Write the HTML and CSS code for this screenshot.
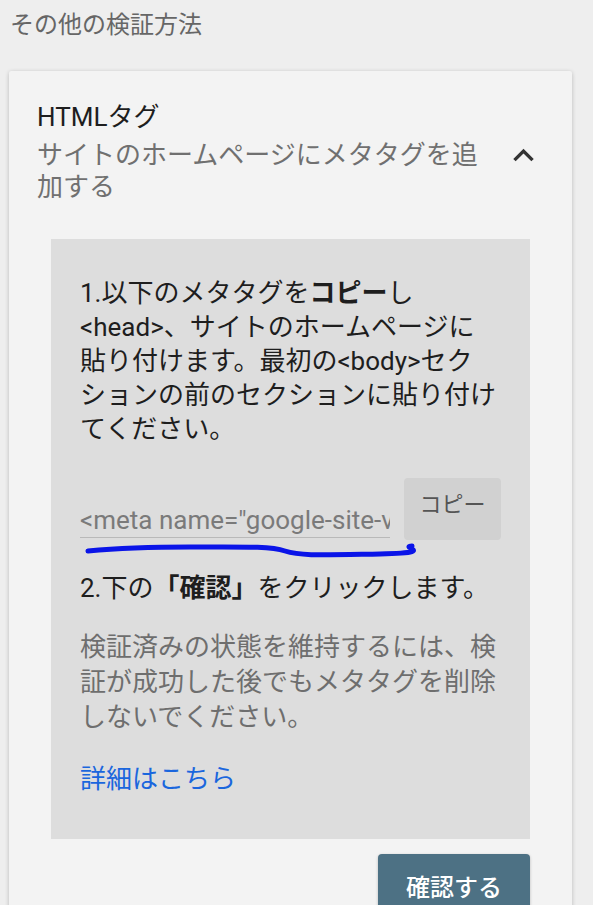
FILE: index.html
```html
<!DOCTYPE html>
<html lang="ja">
<head>
    <meta charset="UTF-8">
    <title>その他の検証方法</title>
    <link rel="stylesheet" href="styles.css">
</head>

<body>
    <div class="section-title">その他の検証方法</div>

    <div class="card">
        <!-- header -->
        <div class="card-header">
            <div class="card-heading">
                <div class="card-title">HTMLタグ</div>
                <div class="card-subtitle">サイトのホームページにメタタグを追加する</div>
            </div>
            <svg class="chevron" viewBox="0 0 24 24" width="41" height="41">
                <path d="M12 8l-6 6 1.41 1.41L12 10.83l4.59 4.58L18 14z" fill="#333"/>
            </svg>
        </div>

        <!-- instructions -->
        <div class="panel">
            <p class="step">1.以下のメタタグを<strong>コピー</strong>し<br>&lt;head&gt;、サイトのホームページに<br>貼り付けます。最初の&lt;body&gt;セク<br>ションの前のセクションに貼り付け<br>てください。</p>

            <div class="copy-row">
                <div class="meta-input">&lt;meta name="google-site-verification" content="4fQx2kq8h7PzT1"&gt;</div>
                <button class="copy-button">コピー</button>
                <svg class="scribble" width="350" height="24" viewBox="0 0 350 24">
                    <path d="M8 14 C 40 11, 60 10, 110 10 S 190 9, 205 14 S 240 18, 300 17 S 318 10, 332 9" fill="none" stroke="#0a14e8" stroke-width="5" stroke-linecap="round"/>
                </svg>
            </div>

            <p class="step step-2">2.下の<strong>「確認」</strong>をクリックします。</p>

            <p class="note">検証済みの状態を維持するには、検証が成功した後でもメタタグを削除しないでください。</p>

            <a href="#" class="more-link">詳細はこちら</a>
        </div>

        <div class="card-actions">
            <button class="verify-button">確認する</button>
        </div>
    </div>
</body>
</html>
```

FILE: styles.css
```css
body{
    margin: 0;
    padding: 9px 21px 0 9px;
    background: #eeeeee;
    font-family: Roboto, "Noto Sans CJK JP", sans-serif;
    color: #222;
}
.section-title{
    padding-left: 1px;
    font-size: 24px;
    line-height: 32px;
    color: #666;
}
.card{
    margin-top: 30px;
    background: #f3f3f3;
    box-shadow: 0 1px 4px rgba(0,0,0,.22);
    border-radius: 2px;
    padding-bottom: 30px;
}
.card-header{
    display: flex;
    align-items: center;
    gap: 8px;
    padding: 30px 28px 0 28px;
}
.card-heading{
    flex: 1;
    font-size: 26px;
}
.card-title{
    line-height: 32px;
    margin-bottom: 6px;
    color: #1e1e1e;
}
.card-subtitle{
    line-height: 32px;
    color: #707070;
}
.chevron{
    flex: none;
    margin-top: 6px;
}

.panel{
    margin: 36px 42px 0;
    padding: 37px 29px 43px;
    background: #dddddd;
    font-size: 26px;
}
.step{
    margin: 0;
    line-height: 34px;
    color: #1e1e1e;
}
.step strong{
    font-weight: 700;
}
.copy-row{
    position: relative;
    display: flex;
    align-items: flex-end;
    gap: 14px;
    margin-top: 32px;
}
.meta-input{
    width: 310px;
    flex: none;
    white-space: nowrap;
    overflow: hidden;
    font-size: 26px;
    line-height: 34px;
    color: #7a7a7a;
    border-bottom: 1px solid #b9b9b9;
    padding-bottom: 0;
    margin-bottom: 2px;
}
.copy-button{
    width: 98px;
    height: 62px;
    border: none;
    border-radius: 4px;
    background: #d1d1d1;
    color: #555;
    font-family: inherit;
    font-size: 22px;
    padding: 0 0 14px;
}
.scribble{
    position: absolute;
    left: 0;
    top: 100%;
    margin-top: -3px;
}
.step-2{
    margin-top: 31px;
}
.note{
    margin: 25px 0 0;
    line-height: 35px;
    color: #6e6e6e;
}
.more-link{
    display: block;
    margin-top: 27px;
    line-height: 34px;
    color: #1a66dd;
    text-decoration: none;
}

.card-actions{
    display: flex;
    justify-content: flex-end;
    padding: 15px 42px 0;
}
.verify-button{
    width: 152px;
    height: 62px;
    border: none;
    border-radius: 4px;
    background: #4d7184;
    color: #fff;
    font-family: inherit;
    font-size: 24px;
    font-weight: 500;
    box-shadow: 0 1px 3px rgba(0,0,0,.25);
}
```
